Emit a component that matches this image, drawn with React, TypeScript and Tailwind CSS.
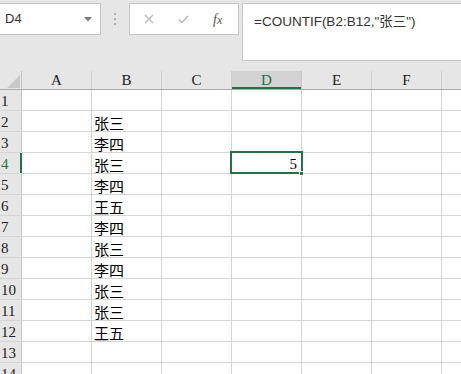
import React from "react";

const cols = ["A", "B", "C", "D", "E", "F", ""];
const data: Record<number, string> = {
  2: "张三",
  3: "李四",
  4: "张三",
  5: "李四",
  6: "王五",
  7: "李四",
  8: "张三",
  9: "李四",
  10: "张三",
  11: "张三",
  12: "王五",
};

const serif = { fontFamily: '"Liberation Serif", "Noto Sans CJK SC", serif' };
const cjk = { fontFamily: '"Noto Sans CJK SC", sans-serif' };

function HeaderRow() {
  return (
    <div className="flex h-[19px] border-b border-[#ababab]">
      <div className="relative w-[22px] shrink-0 border-r border-[#c6c6c6] bg-[#e6e6e6]">
        <svg className="absolute left-[7px] top-[4px]" width="13" height="13" viewBox="0 0 13 13">
          <polygon points="13,0 13,13 0,13" fill="#c8c8c8" />
        </svg>
      </div>
      {cols.map((c, i) => {
        const sel = c === "D";
        return (
          <div
            key={i}
            className={
              "flex w-[70px] shrink-0 items-center justify-center border-r text-[15px] leading-none " +
              (sel
                ? "border-[#c6c6c6] bg-[#d2d2d2] text-[#217346] shadow-[inset_0_-2px_0_#217346]"
                : "border-[#d0d0d0] bg-[#e6e6e6] text-[#222]")
            }
            style={serif}
          >
            {c}
          </div>
        );
      })}
    </div>
  );
}

function Row({ n }: { n: number }) {
  const sel = n === 4;
  return (
    <div className="flex h-[21px] border-b border-[#d4d4d4]">
      <div
        className={
          "flex w-[22px] shrink-0 items-end pb-[1px] pl-[1px] text-[15px] leading-none " +
          (sel
            ? "border-r-2 border-[#217346] bg-[#e6e6e6] text-[#217346]"
            : "border-r border-[#c6c6c6] bg-[#e6e6e6] text-[#222]")
        }
        style={serif}
      >
        {n}
      </div>
      {cols.map((c, i) => (
        <div
          key={i}
          className="flex w-[70px] shrink-0 items-end border-r border-[#d4d4d4] bg-white pb-[1px] pl-[2px] pr-[4px] text-[15px] leading-none text-black"
          style={cjk}
        >
          {c === "B" && data[n] ? data[n] : null}
          {c === "D" && n === 4 ? (
            <span className="ml-auto" style={serif}>
              5
            </span>
          ) : null}
        </div>
      ))}
    </div>
  );
}

export default function App() {
  const rows = Array.from({ length: 14 }, (_, i) => i + 1);
  return (
    <div className="relative h-[374px] w-[461px] overflow-hidden bg-[#e6e6e6]">
      {/* toolbar */}
      <div className="flex h-[71px] items-start pt-[3px]">
        <div className="flex h-[32px] w-[101px] shrink-0 items-center border border-l-0 border-[#c6c6c6] bg-white pl-[5px] pr-[8px]">
          <span
            className="text-[13px] text-[#333]"
            style={{ fontFamily: '"Liberation Sans", Arial, sans-serif' }}
          >
            D4
          </span>
          <svg className="ml-auto" width="8" height="5" viewBox="0 0 8 5">
            <polygon points="0,0 8,0 4,4.5" fill="#7a7a7a" />
          </svg>
        </div>
        <div className="ml-[13px] mt-[10px] flex flex-col gap-[3px]">
          <div className="h-[2px] w-[2px] bg-[#b4b4b4]" />
          <div className="h-[2px] w-[2px] bg-[#b4b4b4]" />
          <div className="h-[2px] w-[2px] bg-[#b4b4b4]" />
        </div>
        <div className="ml-[13px] flex h-[32px] w-[110px] shrink-0 items-center border border-[#c6c6c6] bg-white">
          <svg className="ml-[14px]" width="10" height="10" viewBox="0 0 10 10">
            <path d="M1 1 L9 9 M9 1 L1 9" stroke="#b9b9b9" strokeWidth="1.3" />
          </svg>
          <svg className="ml-[24px]" width="11" height="9" viewBox="0 0 11 9">
            <path d="M1 4.5 L4 7.5 L10 1" stroke="#b9b9b9" strokeWidth="1.5" fill="none" />
          </svg>
          <span
            className="ml-[24px] text-[14px] italic text-[#555]"
            style={{ fontFamily: '"Liberation Serif", serif' }}
          >
            f<span className="text-[12px]">x</span>
          </span>
        </div>
        <div className="ml-[3px] h-[58px] flex-1 border border-r-0 border-[#c6c6c6] bg-white pl-[11px] pt-[4px]">
          <span
            className="text-[13.5px] leading-none text-[#333]"
            style={{ fontFamily: '"Liberation Sans", Arial, "Noto Sans CJK SC", sans-serif' }}
          >
            =COUNTIF(B2:B12,"张三")
          </span>
        </div>
      </div>
      {/* grid */}
      <HeaderRow />
      {rows.map((n) => (
        <Row key={n} n={n} />
      ))}
      {/* selection */}
      <div className="absolute left-[230px] top-[151px] h-[23px] w-[73px] border-2 border-[#217346]" />
      <div className="absolute left-[299px] top-[171px] h-[5px] w-[5px] border border-white bg-[#217346]" />
    </div>
  );
}
